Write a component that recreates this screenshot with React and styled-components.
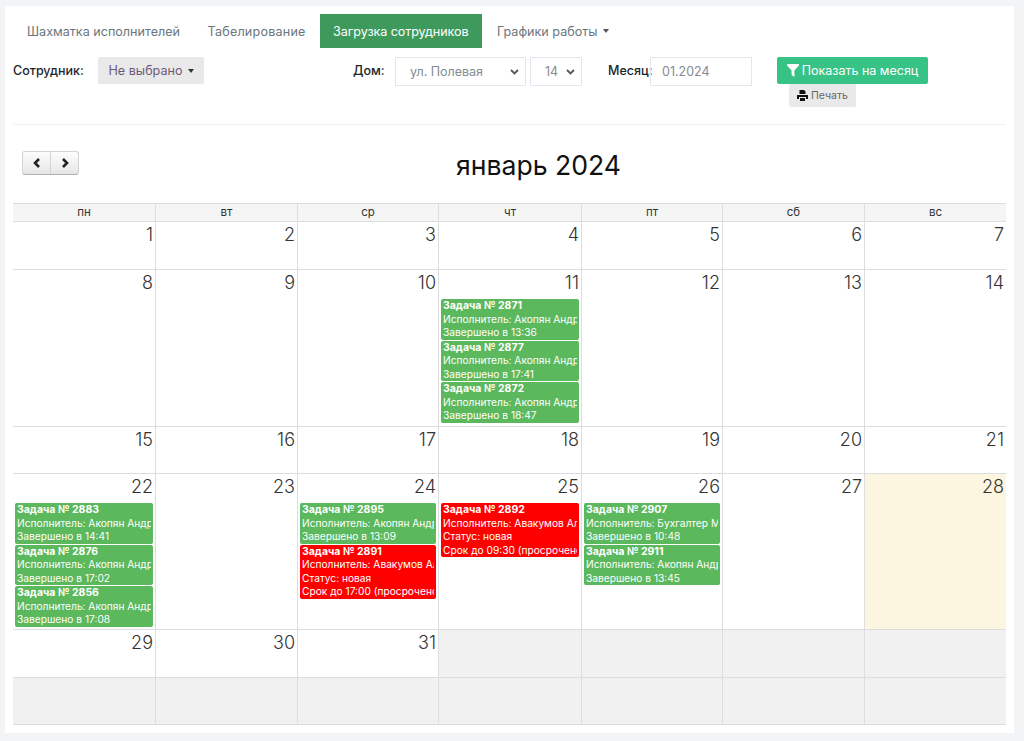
import React from 'react';
import styled, { createGlobalStyle } from 'styled-components';

const Global = createGlobalStyle`
  html, body { margin: 0; padding: 0; background: #f2f4f6; }
  body { font-family: "Inter", "Noto Sans", "Liberation Sans", sans-serif; color: #212529; }
  * { box-sizing: border-box; }
`;

const Card = styled.div`
  margin: 6px 10px 8px 5px;
  height: 727px;
  background: #fff;
  padding: 8px 8px 0;
`;
const Tabs = styled.nav`
  display: flex;
  height: 34px;
`;
const Tab = styled.a`
  display: flex;
  align-items: center;
  height: 34px;
  padding: 0 ${p => p.$right}px 0 ${p => p.$left}px;
  font-size: 12.6px;
  letter-spacing: ${p => p.$ls || 0}px;
  color: ${p => (p.$active ? '#fff' : '#6c757d')};
  background: ${p => (p.$active ? '#3d9a5c' : 'transparent')};
  white-space: nowrap;
`;
const Caret = styled.span`
  display: inline-block;
  width: 0;
  height: 0;
  margin-left: 5px;
  border-left: 3.5px solid transparent;
  border-right: 3.5px solid transparent;
  border-top: 4px solid ${p => p.$color};
`;
const Filters = styled.div`
  display: flex;
  align-items: flex-start;
  margin-top: 9px;
  height: 67px;
  border-bottom: 1px solid #eef0f2;
  box-sizing: content-box;
`;
const Label = styled.span`
  font-size: 12.5px;
  font-weight: 500;
  line-height: 27px;
  color: #212529;
  white-space: nowrap;
  width: ${p => p.$w}px;
  flex: none;
`;
const GreyBtn = styled.button`
  border: 0;
  border-radius: 2px;
  background: #e9e9e9;
  color: #6e5a78;
  font: inherit;
  font-size: 12.6px;
  height: 27px;
  padding: 0;
  width: 106px;
  flex: none;
  display: flex;
  align-items: center;
  justify-content: center;
  margin-right: 149px;
`;
const SelectBox = styled.div`
  width: ${p => p.$w}px;
  height: 29px;
  margin-right: ${p => p.$mr}px;
  flex: none;
  border: 1px solid #e4e6ee;
  display: flex;
  align-items: center;
  padding-left: ${p => p.$pl}px;
  padding-right: 6px;
  justify-content: space-between;
  font-size: 12.5px;
  color: #858b92;
  white-space: nowrap;
`;
const Chev = styled.svg`
  width: 9px;
  height: 6px;
  flex: none;
`;
const Actions = styled.div`
  display: flex;
  flex-direction: column;
  align-items: flex-start;
  margin-left: 25px;
`;
const ShowBtn = styled.button`
  border: 0;
  border-radius: 2px;
  background: #37c386;
  color: #fff;
  font: inherit;
  font-size: 12.5px;
  width: 151px;
  height: 27px;
  display: flex;
  align-items: center;
  justify-content: center;
  gap: 3px;
  padding: 0;
  white-space: nowrap;
`;
const PrintBtn = styled.button`
  border: 0;
  border-radius: 2px;
  background: #e9e9e9;
  color: #666;
  font: inherit;
  font-size: 10.5px;
  width: 67px;
  height: 23px;
  margin-left: 12px;
  display: flex;
  align-items: center;
  justify-content: center;
  gap: 3px;
  padding: 0;
`;
const Toolbar = styled.div`
  position: relative;
  height: 78px;
  display: flex;
  align-items: flex-start;
  justify-content: center;
  padding: 25px 0 0 58px;
`;
const Title = styled.h2`
  margin: 0;
  font-size: 26.6px;
  font-weight: 400;
  line-height: 30px;
  color: #111;
`;
const NavGroup = styled.div`
  position: absolute;
  left: 9px;
  top: 26px;
  display: flex;
  width: 57px;
  height: 24px;
  border-radius: 3px;
  overflow: hidden;
  border: 1px solid #d4d4d4;
  border-bottom-color: #b0b0b0;
  background: linear-gradient(#fdfdfd, #e6e6e6);
`;
const NavBtn = styled.span`
  flex: 1;
  display: flex;
  align-items: center;
  justify-content: center;
  & + & { border-left: 1px solid #d4d4d4; }
`;
const Grid = styled.div`
  display: grid;
  grid-template-columns: 143px 142px 141px 143px 141px 142px 141px;
`;
const Head = styled.div`
  height: 19px;
  background: #f5f5f5;
  border-top: 1px solid #ddd;
  border-bottom: 1px solid #ddd;
  border-right: ${p => (p.$last ? 0 : '1px solid #ddd')};
  text-align: center;
  font-size: 11.5px;
  line-height: 17px;
  color: #333;
`;
const Day = styled.div`
  height: ${p => p.$h}px;
  background: ${p => (p.$today ? '#fcf6e0' : p.$muted ? '#f1f1f1' : '#fff')};
  border-right: ${p => (p.$last ? 0 : '1px solid #ddd')};
  border-bottom: 1px solid #ddd;
  padding: 0 2px;
  min-width: 0;
`;
const Num = styled.div`
  height: 29px;
  text-align: right;
  font-size: 18px;
  line-height: 26px;
  color: #333;
  font-weight: 300;
`;
const Event = styled.div`
  background: ${p => (p.$red ? '#ff0000' : '#5cb85c')};
  border-radius: 2px;
  color: #fff;
  margin-bottom: 1px;
  padding: 0 2px;
  font-size: 10.2px;
  line-height: 13.5px;
  overflow: hidden;
  white-space: nowrap;
`;
const EventTitle = styled.div`
  font-weight: 700;
  font-size: 10.5px;
`;
const EventLine = styled.div`
  overflow: hidden;
`;

const FunnelIcon = () => (
  <svg width="12" height="13" viewBox="0 0 12 13"><path d="M0 0h12v1.6L7.4 6.4V13L4.6 11V6.4L0 1.6z" fill="#fff" /></svg>
);
const PrinterIcon = () => (
  <svg width="11" height="11" viewBox="0 0 11 11"><path d="M3 0h4l1.5 1.5V4h-6V0zM0 5h11v4H9V7H2v2H0zM3 8h5v3H3z" fill="#111" /></svg>
);
const Chevron = ({ left }) => (
  <svg width="8" height="10" viewBox="0 0 8 10"><path d={left ? 'M6 1L2 5l4 4' : 'M2 1l4 4-4 4'} fill="none" stroke="#222" strokeWidth="2.6" /></svg>
);
const Arrow = () => (
  <Chev viewBox="0 0 9 6"><path d="M1 1l3.5 3.5L8 1" fill="none" stroke="#555" strokeWidth="1.8" /></Chev>
);

const done = (id, who, t) => ({ id, lines: [`Исполнитель: ${who}`, `Завершено в ${t}`] });
const late = (id, who, t) => ({ id, red: true, lines: [`Исполнитель: ${who}`, 'Статус: новая', `Срок до ${t} (просрочено)`] });
const AA = 'Акопян Андрей';
const AV = 'Авакумов Алексей';
const events = {
  11: [done(2871, AA, '13:36'), done(2877, AA, '17:41'), done(2872, AA, '18:47')],
  22: [done(2883, AA, '14:41'), done(2876, AA, '17:02'), done(2856, AA, '17:08')],
  24: [done(2895, AA, '13:09'), late(2891, AV, '17:00')],
  25: [late(2892, AV, '09:30')],
  26: [done(2907, 'Бухгалтер Мария', '10:48'), done(2911, AA, '13:45')],
};
const weeks = [
  { h: 48, days: [1, 2, 3, 4, 5, 6, 7] },
  { h: 157, days: [8, 9, 10, 11, 12, 13, 14] },
  { h: 47, days: [15, 16, 17, 18, 19, 20, 21] },
  { h: 156, days: [22, 23, 24, 25, 26, 27, 28] },
  { h: 48, days: [29, 30, 31, null, null, null, null] },
  { h: 47, days: [null, null, null, null, null, null, null] },
];
const heads = ['пн', 'вт', 'ср', 'чт', 'пт', 'сб', 'вс'];

export default function App() {
  return (
    <>
      <Global />
      <Card>
        <Tabs>
          <Tab $left={14} $right={13.5}>Шахматка исполнителей</Tab>
          <Tab $left={14} $right={14} $ls={0.2}>Табелирование</Tab>
          <Tab $active $left={13.5} $right={13.5} $ls={-0.1}>Загрузка сотрудников</Tab>
          <Tab $left={15} $right={13}>Графики работы<Caret $color="#555" /></Tab>
        </Tabs>
        <Filters>
          <Label $w={85}>Сотрудник:</Label>
          <GreyBtn>Не выбрано<Caret $color="#333" /></GreyBtn>
          <Label $w={42}>Дом:</Label>
          <SelectBox $w={131} $mr={4} $pl={14}>ул. Полевая<Arrow /></SelectBox>
          <SelectBox $w={52} $mr={26} $pl={14}>14<Arrow /></SelectBox>
          <Label $w={42}>Месяц:</Label>
          <SelectBox $w={102} $mr={0} $pl={11}>01.2024</SelectBox>
          <Actions>
            <ShowBtn><FunnelIcon />Показать на месяц</ShowBtn>
            <PrintBtn><PrinterIcon />Печать</PrintBtn>
          </Actions>
        </Filters>
        <Toolbar>
          <NavGroup>
            <NavBtn><Chevron left /></NavBtn>
            <NavBtn><Chevron /></NavBtn>
          </NavGroup>
          <Title>январь 2024</Title>
        </Toolbar>
        <Grid>
          {heads.map((d, i) => <Head key={d} $last={i === 6}>{d}</Head>)}
          {weeks.map(w => w.days.map((d, i) => (
            <Day key={`${w.h}-${w.days[0]}-${i}`} $h={w.h} $last={i === 6} $muted={d === null} $today={d === 28}>
              {d !== null && <Num>{d}</Num>}
              {(events[d] || []).map(e => (
                <Event key={e.id} $red={e.red}>
                  <EventTitle>Задача № {e.id}</EventTitle>
                  {e.lines.map(l => <EventLine key={l}>{l}</EventLine>)}
                </Event>
              ))}
            </Day>
          )))}
        </Grid>
      </Card>
    </>
  );
}
